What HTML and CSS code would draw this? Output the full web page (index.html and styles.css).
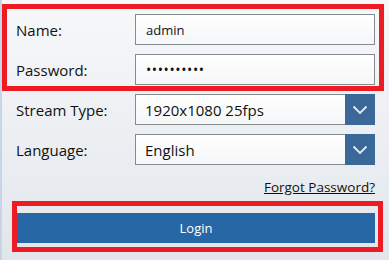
FILE: index.html
```html
<!DOCTYPE html>
<html>
<head>
    <meta name="viewport" content="width=device-width, initial-scale=1">
    <link rel="stylesheet" href="styles.css">
</head>
<body>
    <div class="page">
        <!-- Credentials -->
        <div class="mark creds">
            <div class="row">
                <label class="label" for="user">Name:</label>
                <input class="field" id="user" type="text" value="admin">
            </div>
            <div class="row row-next">
                <label class="label" for="pass">Password:</label>
                <input class="field field-pass" id="pass" type="password" value="adminadmin">
            </div>
        </div>

        <!-- Options -->
        <div class="options">
            <div class="row">
                <span class="label">Stream Type:</span>
                <div class="select">
                    <span class="select-value">1920x1080 25fps</span>
                    <span class="select-btn">
                        <svg width="16" height="10" viewBox="0 0 16 10"><path d="M1.5 1.5 L8 8 L14.5 1.5" fill="none" stroke="#e6ecf2" stroke-width="1.8"/></svg>
                    </span>
                </div>
            </div>
            <div class="row row-next">
                <span class="label">Language:</span>
                <div class="select">
                    <span class="select-value">English</span>
                    <span class="select-btn">
                        <svg width="16" height="10" viewBox="0 0 16 10"><path d="M1.5 1.5 L8 8 L14.5 1.5" fill="none" stroke="#e6ecf2" stroke-width="1.8"/></svg>
                    </span>
                </div>
            </div>
        </div>

        <div class="forgot-row">
            <a class="forgot" href="#">Forgot Password?</a>
        </div>

        <div class="mark login-mark">
            <button class="login">Login</button>
        </div>
    </div>
</body>
</html>
```

FILE: styles.css
```css
html {
    height: 100%;
}

body {
    margin: 0;
    min-height: 100%;
    border-left: 2px solid #c8d5e6;
    background: linear-gradient(#f7f8fa, #e2e6eb);
    font-family: "Open Sans", "Noto Sans", sans-serif;
    color: #111;
}

.page {
    padding-top: 4px;
}

/* Red highlight boxes */
.mark {
    border: 5px solid #ed1c24;
}

.creds {
    margin-right: 5px;
    padding: 5px 4px 1px 9px;
}

.options {
    margin-top: 3px;
    padding: 0 14px;
}

.row {
    display: flex;
    align-items: center;
    height: 31px;
}

.row-next {
    margin-top: 9px;
}

.label {
    width: 119px;
    flex-shrink: 0;
    font-size: 15px;
}

.field {
    box-sizing: border-box;
    width: 240px;
    height: 31px;
    margin: 0;
    padding: 0 10px;
    border: 1px solid #868b8e;
    background: linear-gradient(#ffffff, #f5f6f8);
    font-family: inherit;
    font-size: 13px;
    color: #111;
    outline: none;
}

.field-pass {
    font-size: 14px;
    letter-spacing: 0.6px;
}

.select {
    box-sizing: border-box;
    display: flex;
    align-items: center;
    width: 240px;
    height: 31px;
    border: 1px solid #868b8e;
    background: linear-gradient(#ffffff, #f5f6f8);
}

.select-value {
    flex: 1;
    padding-left: 9px;
    font-size: 15px;
}

.select-btn {
    display: flex;
    align-items: center;
    justify-content: center;
    align-self: stretch;
    width: 30px;
    margin: -1px -1px -1px 0;
    background: #3a6898;
}

.forgot-row {
    display: flex;
    justify-content: flex-end;
    height: 36px;
    padding-right: 14px;
    box-sizing: border-box;
    padding-top: 13px;
}

.forgot {
    font-size: 13.5px;
    line-height: 18px;
    color: #111;
    text-decoration: underline;
}

.login-mark {
    margin: 0 6px 0 10px;
    padding: 2px 3px 4px 0;
}

.login {
    display: block;
    width: 100%;
    height: 30px;
    margin: 5px 0 0;
    border: none;
    background: #2767a6;
    color: #fff;
    font-family: inherit;
    font-size: 13px;
    cursor: pointer;
}
```
